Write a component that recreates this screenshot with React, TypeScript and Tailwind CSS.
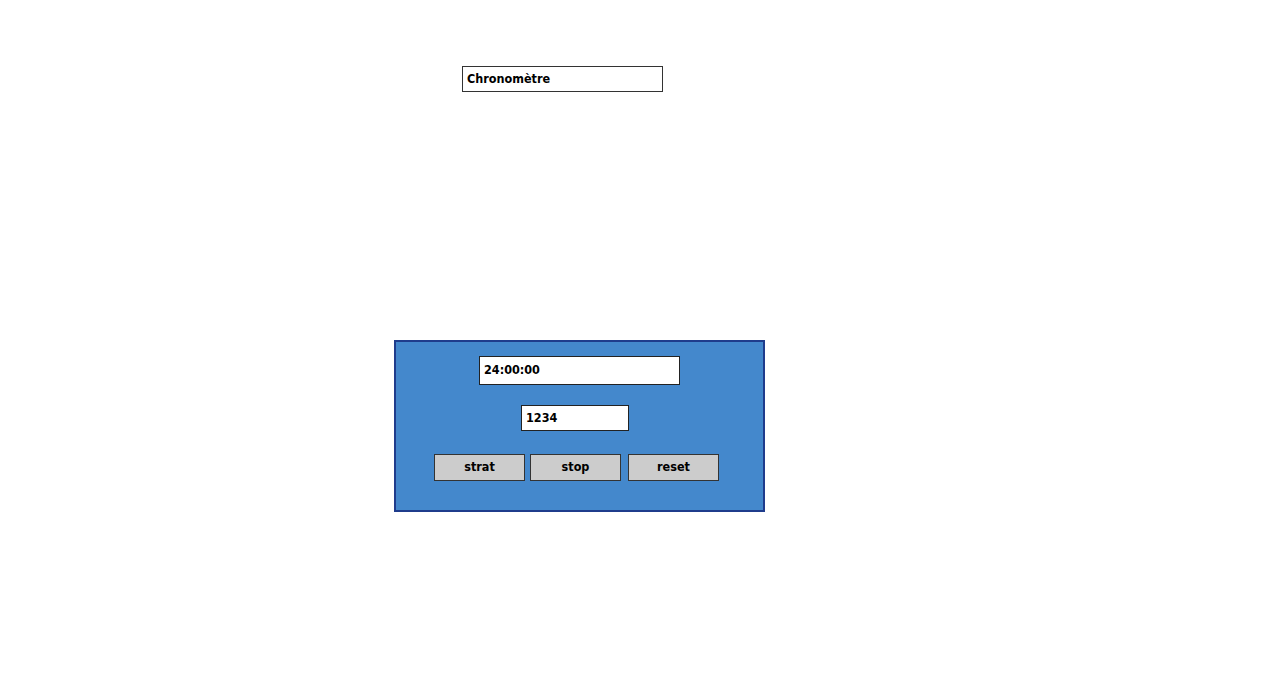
import React from "react";

const font = { fontFamily: '"DejaVu Sans Condensed", "DejaVu Sans", Verdana, sans-serif' };

function Btn({ label }: { label: string }) {
  return (
    <div className="w-[91px] h-[27px] bg-[#cccccc] border border-[#333333] flex items-center justify-center text-[12.5px] font-bold text-black">
      {label}
    </div>
  );
}

export default function App() {
  return (
    <div className="w-[1270px] h-[695px] bg-white overflow-hidden" style={font}>
      <div className="pt-[66px] pl-[462px]">
        <div className="w-[201px] h-[26px] border border-[#333333] flex items-center pl-[4px] text-[12.5px] font-bold text-black">
          Chronomètre
        </div>
      </div>
      <div className="pl-[394px] pt-[248px]">
        <div className="w-[371px] h-[172px] bg-[#4488cc] border-2 border-[#1f3c8c] flex flex-col items-center pt-[14px]">
          <div className="w-[201px] h-[29px] bg-white border border-[#222222] flex items-center pl-[4px] text-[12.5px] font-bold text-black">
            24:00:00
          </div>
          <div className="mt-[20px] mr-[9px] w-[108px] h-[26px] bg-white border border-[#222222] flex items-center pl-[4px] text-[12.5px] font-bold text-black">
            1234
          </div>
          <div className="mt-[23px] mr-[6px] flex">
            <Btn label="strat" />
            <div className="w-[5px]" />
            <Btn label="stop" />
            <div className="w-[7px]" />
            <Btn label="reset" />
          </div>
        </div>
      </div>
    </div>
  );
}
